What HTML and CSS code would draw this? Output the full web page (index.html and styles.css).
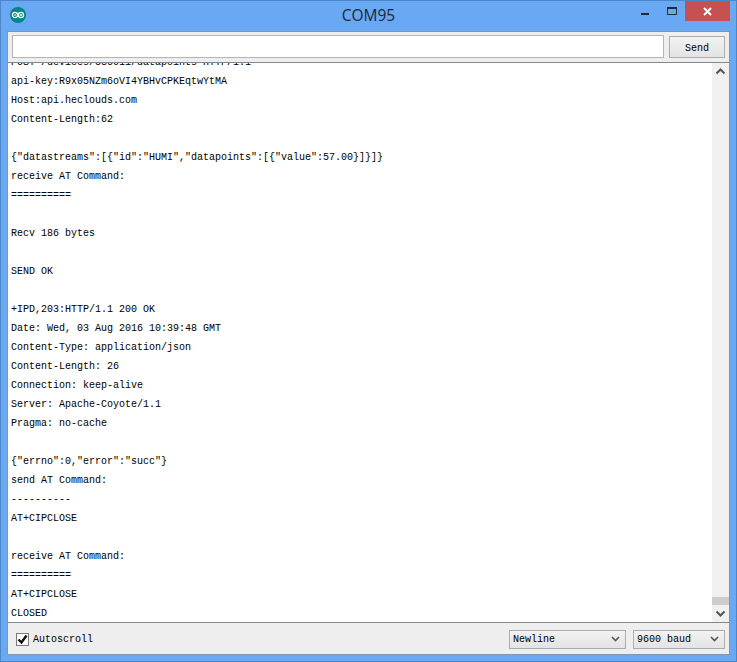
FILE: index.html
```html
<!DOCTYPE html>
<html lang="en">
<head>
<meta charset="utf-8">
<title>COM95</title>
<link rel="stylesheet" href="styles.css">
</head>
<body>
<div class="window">
  <header class="titlebar">
    <svg class="logo" width="16" height="16" viewBox="0 0 16 16">
      <circle cx="8" cy="8" r="8" fill="#00858a"/>
      <circle cx="5" cy="8" r="2.600" fill="none" stroke="#fff" stroke-width="1.200"/>
      <circle cx="11" cy="8" r="2.600" fill="none" stroke="#fff" stroke-width="1.200"/>
      <path d="M3.800 8h2.400M9.800 8h2.400M11 6.800v2.400" stroke="#fff" stroke-width="1"/>
    </svg>
    <div class="title">COM95</div>
    <div class="controls">
      <svg class="ctl" width="27" height="20" viewBox="0 0 27 20"><rect x="10" y="12" width="8" height="2" fill="#222c38"/></svg>
      <svg class="ctl" width="27" height="20" viewBox="0 0 27 20"><path d="M9.500 6.500h9v7h-9z" fill="none" stroke="#222c38"/><rect x="9" y="6" width="10" height="2" fill="#222c38"/></svg>
      <div class="close">
        <svg width="9" height="9" viewBox="0 0 9 9"><path d="M1 1l7 7M8 1l-7 7" stroke="#fff" stroke-width="2"/></svg>
      </div>
    </div>
  </header>
  <main class="client">
    <div class="sendbar">
      <input class="field" type="text" aria-label="Message">
      <button class="btn" type="button">Send</button>
    </div>
    <div class="output">
      <div class="log">
        <div class="line">POST /devices/586011/datapoints HTTP/1.1</div>
        <div class="line">api-key:R9x05NZm6oVI4YBHvCPKEqtwYtMA</div>
        <div class="line">Host:api.heclouds.com</div>
        <div class="line">Content-Length:62</div>
        <div class="line"></div>
        <div class="line">{"datastreams":[{"id":"HUMI","datapoints":[{"value":57.00}]}]}</div>
        <div class="line">receive AT Command:</div>
        <div class="line">==========</div>
        <div class="line"></div>
        <div class="line">Recv 186 bytes</div>
        <div class="line"></div>
        <div class="line">SEND OK</div>
        <div class="line"></div>
        <div class="line">+IPD,203:HTTP/1.1 200 OK</div>
        <div class="line">Date: Wed, 03 Aug 2016 10:39:48 GMT</div>
        <div class="line">Content-Type: application/json</div>
        <div class="line">Content-Length: 26</div>
        <div class="line">Connection: keep-alive</div>
        <div class="line">Server: Apache-Coyote/1.1</div>
        <div class="line">Pragma: no-cache</div>
        <div class="line"></div>
        <div class="line">{"errno":0,"error":"succ"}</div>
        <div class="line">send AT Command:</div>
        <div class="line">----------</div>
        <div class="line">AT+CIPCLOSE</div>
        <div class="line"></div>
        <div class="line">receive AT Command:</div>
        <div class="line">==========</div>
        <div class="line">AT+CIPCLOSE</div>
        <div class="line">CLOSED</div>
      </div>
      <div class="scrollbar">
        <svg class="arrow" width="17" height="17" viewBox="0 0 17 17"><path d="M4.500 10.500l4-4 4 4" fill="none" stroke="#555" stroke-width="2"/></svg>
        <div class="track"><div class="thumb"></div></div>
        <svg class="arrow" width="17" height="17" viewBox="0 0 17 17"><path d="M4.500 6.500l4 4 4-4" fill="none" stroke="#555" stroke-width="2"/></svg>
      </div>
    </div>
    <footer class="statusbar">
      <label class="autoscroll">
        <span class="check">
          <svg width="11" height="11" viewBox="0 0 11 11"><path d="M1.500 5.500l3 3 5-7" fill="none" stroke="#111" stroke-width="2.400"/></svg>
        </span>
        Autoscroll
      </label>
      <div class="combo combo-newline">Newline<svg width="9" height="6" viewBox="0 0 9 6"><path d="M1 1l3.500 3.500 3.500-3.500" fill="none" stroke="#555" stroke-width="1.600"/></svg></div>
      <div class="combo combo-baud">9600 baud<svg width="9" height="6" viewBox="0 0 9 6"><path d="M1 1l3.500 3.500 3.500-3.500" fill="none" stroke="#555" stroke-width="1.600"/></svg></div>
    </footer>
  </main>
</div>
</body>
</html>
```
FILE: styles.css
```css
* { box-sizing: border-box; }
html, body { margin: 0; padding: 0; }
body { width: 737px; height: 662px; overflow: hidden; font-family: "Liberation Mono", monospace; font-size: 10px; color: #000; }
.window { width: 737px; height: 662px; background: #69a9f4; border: 1px solid #4a86c8; padding: 0 6px 6px; display: flex; flex-direction: column; }
.titlebar { height: 30px; flex: none; display: flex; align-items: flex-start; position: relative; }
.logo { margin: 6px 0 0 3px; }
.title { position: absolute; left: 0; right: 0; top: 3px; text-align: center; font: 15.500px "Open Sans", "Liberation Sans", sans-serif; color: #1c2733; }
.controls { margin-left: auto; display: flex; position: relative; }
.ctl { display: block; }
.close { width: 45px; height: 20px; background: #c75050; display: flex; align-items: center; justify-content: center; }
.close svg { display: block; }
.client { flex: 1; min-height: 0; display: flex; flex-direction: column; background: #eeeeee; border: 1px solid #7f96ad; }
.sendbar { height: 30px; flex: none; display: flex; align-items: flex-start; padding: 3px 4px 0 4px; gap: 5px; }
.field { flex: 1; height: 23px; margin: 0; background: #fff; border: 1px solid #b4b4b4; outline: 0; padding: 0; }
.btn { width: 56px; height: 22px; margin: 1px 0 0; padding: 2px 0 0; background: linear-gradient(#f2f2f2, #e3e3e3); border: 1px solid #adadad; font: 10px "Liberation Mono", monospace; color: #000; }
.output { flex: 1; min-height: 0; display: flex; background: #fff; border-top: 1px solid #808a94; border-bottom: 1px solid #808a94; }
.log { flex: 1; min-width: 0; overflow: hidden; display: flex; flex-direction: column; justify-content: flex-end; padding-left: 3px; }
.line { height: 19px; flex: none; line-height: 21px; white-space: pre; }
.scrollbar { width: 17px; flex: none; display: flex; flex-direction: column; background: #f0f0f0; }
.arrow { display: block; flex: none; }
.track { flex: 1; display: flex; flex-direction: column; justify-content: flex-end; }
.thumb { height: 8px; background: #cdcdcd; }
.statusbar { height: 31px; flex: none; display: flex; align-items: center; padding: 1px 4px 0 8px; }
.autoscroll { display: flex; align-items: center; gap: 4px; margin-right: auto; }
.check { width: 13px; height: 13px; background: #fff; border: 1px solid #7a7a7a; display: flex; align-items: center; justify-content: center; }
.check svg { display: block; }
.combo { height: 19px; background: linear-gradient(#f2f2f2, #e3e3e3); border: 1px solid #adadad; display: flex; align-items: center; justify-content: space-between; padding: 0 5px 0 3px; }
.combo-newline { width: 117px; margin-right: 7px; }
.combo-baud { width: 92px; }
```
